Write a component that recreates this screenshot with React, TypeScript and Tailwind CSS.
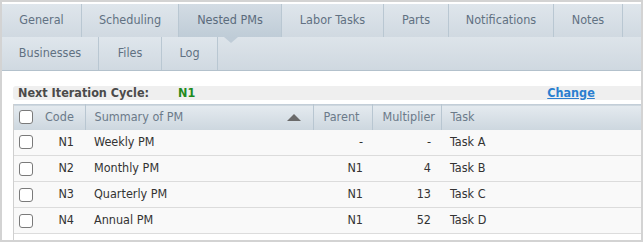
import React from 'react';

type Tab = { label: string; w: number; active?: boolean };

const row1: Tab[] = [
  { label: 'General', w: 80 },
  { label: 'Scheduling', w: 97 },
  { label: 'Nested PMs', w: 103, active: true },
  { label: 'Labor Tasks', w: 102 },
  { label: 'Parts', w: 65 },
  { label: 'Notifications', w: 105 },
  { label: 'Notes', w: 69 },
];

const row2: Tab[] = [
  { label: 'Businesses', w: 97 },
  { label: 'Files', w: 63 },
  { label: 'Log', w: 56 },
];

const rows = [
  { code: 'N1', summary: 'Weekly PM', parent: '-', mult: '-', task: 'Task A' },
  { code: 'N2', summary: 'Monthly PM', parent: 'N1', mult: '4', task: 'Task B' },
  { code: 'N3', summary: 'Quarterly PM', parent: 'N1', mult: '13', task: 'Task C' },
  { code: 'N4', summary: 'Annual PM', parent: 'N1', mult: '52', task: 'Task D' },
];

const font = { fontFamily: '"DejaVu Sans Condensed", "Noto Sans", sans-serif' };

const Checkbox = () => (
  <span className="block h-[14px] w-[14px] rounded-[3px] border border-[#7a7a7a] bg-white" />
);

const TabCell = ({ tab }: { tab: Tab }) => (
  <div
    className={
      'flex h-full items-center justify-center border-r border-[#b9c7d2] text-[12.5px] ' +
      (tab.active
        ? 'bg-gradient-to-b from-[#d3dce4] to-[#bfccd7] text-[#5b6b7c]'
        : 'bg-gradient-to-b from-[#dfe6ec] to-[#d0d9e1] text-[#617182]')
    }
    style={{ width: tab.w }}
  >
    {tab.label}
  </div>
);

const App = () => {
  return (
    <div
      className="flex h-[242px] w-[643px] flex-col border-2 border-[#d3d3d3] bg-white pt-[2px]"
      style={font}
    >
      {/* Tabs */}
      <div className="flex h-[33px] bg-gradient-to-b from-[#dfe6ec] to-[#d0d9e1]">
        {row1.map((t) => (
          <TabCell key={t.label} tab={t} />
        ))}
      </div>
      <div className="relative flex h-[34px] border-b border-[#b3c1cc] bg-gradient-to-b from-[#dde4ea] to-[#cfd8e0]">
        {row2.map((t) => (
          <TabCell key={t.label} tab={t} />
        ))}
        {/* active tab pointer */}
        <span className="absolute left-[222px] top-0 h-0 w-0 border-x-[7px] border-t-[6px] border-x-transparent border-t-[#bfccd7]" />
      </div>

      {/* Content */}
      <div className="flex flex-1 flex-col pl-[11px] pt-[15px]">
        <div className="flex h-[14px] items-center rounded-l-[3px] bg-[#efefef] text-[12.5px] font-bold">
          <span className="ml-[5px] w-[160px] text-[#4a4a4a]">Next Iteration Cycle:</span>
          <span className="text-[#1e8a1e]">N1</span>
          <a className="ml-[352px] text-[#2b7fd0] underline" href="#">
            Change
          </a>
        </div>

        <div className="mt-[4px] flex-1 border-l border-[#cfcfcf]">
          <table className="w-full border-collapse text-[12.5px]">
            <thead>
              <tr className="h-[25px] border-t border-[#c3ced8] bg-gradient-to-b from-[#e4eaef] to-[#cdd7df] text-[#6b7a89]">
                <th className="w-[25px] pl-[5px] font-normal">
                  <Checkbox />
                </th>
                <th className="w-[46px] border-r border-[#b8c6d1] pl-[6px] text-left font-normal">Code</th>
                <th className="w-[228px] border-r border-[#b8c6d1] pl-[9px] pr-[12px] text-left font-normal">
                  <div className="flex items-center justify-between">
                    <span>Summary of PM</span>
                    <span className="h-0 w-0 border-x-[7px] border-b-[7px] border-x-transparent border-b-[#6a6a6a]" />
                  </div>
                </th>
                <th className="w-[59px] border-r border-[#b8c6d1] pl-[10px] text-left font-normal">Parent</th>
                <th className="w-[69px] border-r border-[#b8c6d1] pl-[10px] text-left font-normal">Multiplier</th>
                <th className="pl-[9px] text-left font-normal">Task</th>
              </tr>
            </thead>
            <tbody className="text-[#333]">
              {rows.map((r) => (
                <tr key={r.code} className="h-[26px] border-b border-[#dcdcdc] bg-[#f9f9f9]">
                  <td className="pl-[5px]">
                    <Checkbox />
                  </td>
                  <td className="pr-[11px] text-right">{r.code}</td>
                  <td className="pl-[9px]">{r.summary}</td>
                  <td className="pr-[9px] text-right">{r.parent}</td>
                  <td className="pr-[10px] text-right">{r.mult}</td>
                  <td className="pl-[9px]">{r.task}</td>
                </tr>
              ))}
            </tbody>
          </table>
        </div>
      </div>
    </div>
  );
};

export default App;
